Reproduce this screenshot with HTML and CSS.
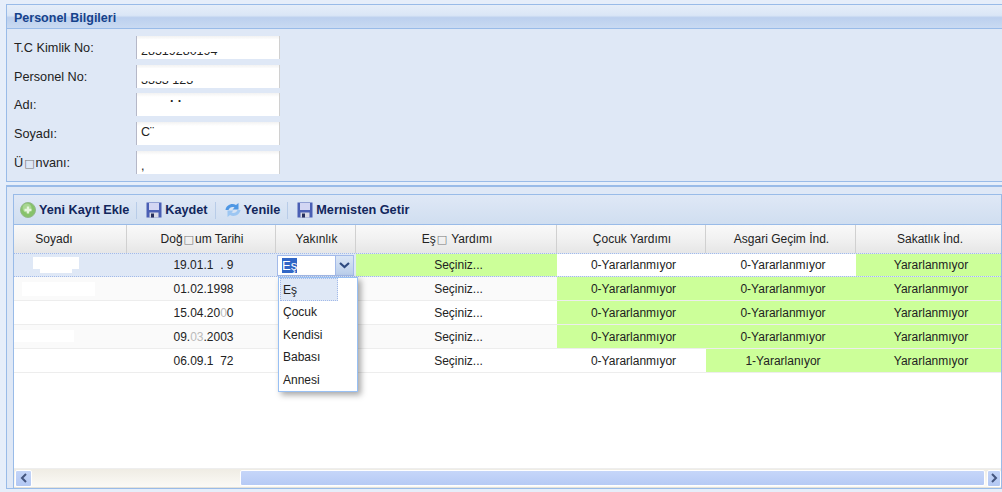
FILE: index.html
```html
<!DOCTYPE html>
<html lang="tr">
<head>
    <meta charset="UTF-8">
    <title>Personel Bilgileri</title>
    <link rel="stylesheet" href="styles.css">
</head>
<body>
    <section class="panel info-panel">
        <h2 class="panel-title">Personel Bilgileri</h2>
        <div class="form">
            <div class="form-row"><label>T.C Kimlik No:</label><div class="field"><span class="field-val">28519280194</span><span class="cover"></span></div></div>
            <div class="form-row"><label>Personel No:</label><div class="field"><span class="field-val">3333 123</span><span class="cover"></span></div></div>
            <div class="form-row"><label>Adı:</label><div class="field"><span class="field-dots">· ·</span></div></div>
            <div class="form-row"><label>Soyadı:</label><div class="field"><span class="field-top">C¨</span></div></div>
            <div class="form-row"><label>Ü<span class="box">□</span>nvanı:</label><div class="field"><span class="field-val">,</span></div></div>
        </div>
    </section>

    <section class="panel list-panel">
        <div class="grid-panel">
            <div class="toolbar">
                <button class="tool">
                    <svg width="16" height="16" viewBox="0 0 16 16"><circle cx="8" cy="8" r="7.5" fill="#86c26a" stroke="#94b98c"/><circle cx="7" cy="6" r="4.500" fill="#a9d692"/><path d="M8 4.500v7M4.500 8h7" stroke="#e6f5dd" stroke-width="2.400"/></svg>
                    Yeni Kayıt Ekle
                </button>
                <span class="sep"></span>
                <button class="tool">
                    <svg width="16" height="16" viewBox="0 0 16 16"><use href="#floppy"/></svg>
                    Kaydet
                </button>
                <span class="sep"></span>
                <button class="tool">
                    <svg width="16" height="16" viewBox="0 0 16 16"><path d="M0.500 8C1 3.500 6.500 0.500 11 3L13.500 1v6.500H7.500l2-2C7 4.500 4.500 5.500 3.500 8z" fill="#4f97e4"/><path d="M15.500 8C15 12.500 9.500 15.500 5 13L2.500 15V8.500h6l-2 2C9 11.500 11.500 10.500 12.500 8z" fill="#9cc6f2"/></svg>
                    Yenile
                </button>
                <span class="sep"></span>
                <button class="tool">
                    <svg width="16" height="16" viewBox="0 0 16 16"><use href="#floppy"/></svg>
                    Mernisten Getir
                </button>
            </div>

            <div class="grid-head">
                <div class="col c1">Soyadı</div>
                <div class="col c2">Doğ<span class="box">□</span>um Tarihi</div>
                <div class="col c3">Yakınlık</div>
                <div class="col c4">Eş<span class="box">□</span> Yardımı</div>
                <div class="col c5">Çocuk Yardımı</div>
                <div class="col c6">Asgari Geçim İnd.</div>
                <div class="col c7">Sakatlık İnd.</div>
            </div>

            <div class="grid-body">
                <div class="row selected">
                    <div class="cell c1"><span class="blob b1"></span></div>
                    <div class="cell c2">19.01.1<span class="hide">9</span>.<span class="hide">.</span>9</div>
                    <div class="cell c3">
                        <div class="combo"><span class="combo-input"><span class="hl">Eş</span></span><span class="combo-btn"><svg width="11" height="7" viewBox="0 0 11 7"><path d="M1 1l4.500 4L10 1" fill="none" stroke="#2f4a80" stroke-width="2.200"/></svg></span></div>
                    </div>
                    <div class="cell c4 on">Seçiniz...</div>
                    <div class="cell c5 plain">0-Yararlanmıyor</div>
                    <div class="cell c6 plain">0-Yararlanmıyor</div>
                    <div class="cell c7 on">Yararlanmıyor</div>
                </div>
                <div class="row alt">
                    <div class="cell c1"><span class="blob b2"></span></div>
                    <div class="cell c2">01.02.1998</div>
                    <div class="cell c3"></div>
                    <div class="cell c4">Seçiniz...</div>
                    <div class="cell c5 on">0-Yararlanmıyor</div>
                    <div class="cell c6 on">0-Yararlanmıyor</div>
                    <div class="cell c7 on">Yararlanmıyor</div>
                </div>
                <div class="row">
                    <div class="cell c1"></div>
                    <div class="cell c2">15.04.20<span class="faint">0</span>0</div>
                    <div class="cell c3"></div>
                    <div class="cell c4">Seçiniz...</div>
                    <div class="cell c5 on">0-Yararlanmıyor</div>
                    <div class="cell c6 on">0-Yararlanmıyor</div>
                    <div class="cell c7 on">Yararlanmıyor</div>
                </div>
                <div class="row alt">
                    <div class="cell c1"><span class="blob b3"></span></div>
                    <div class="cell c2">09.<span class="faint">03</span>.2003</div>
                    <div class="cell c3"></div>
                    <div class="cell c4">Seçiniz...</div>
                    <div class="cell c5 on">0-Yararlanmıyor</div>
                    <div class="cell c6 on">0-Yararlanmıyor</div>
                    <div class="cell c7 on">Yararlanmıyor</div>
                </div>
                <div class="row">
                    <div class="cell c1"></div>
                    <div class="cell c2">06.09.1<span class="hide">9</span>72</div>
                    <div class="cell c3"></div>
                    <div class="cell c4">Seçiniz...</div>
                    <div class="cell c5">0-Yararlanmıyor</div>
                    <div class="cell c6 on">1-Yararlanıyor</div>
                    <div class="cell c7 on">Yararlanmıyor</div>
                </div>
            </div>

            <div class="scrollbar">
                <span class="sb-btn"><svg width="8" height="10" viewBox="0 0 8 10"><path d="M6 1L2 5l4 4" fill="none" stroke="#44557f" stroke-width="2"/></svg></span>
                <span class="sb-track"><span class="sb-thumb"></span></span>
                <span class="sb-btn sb-right"><svg width="8" height="10" viewBox="0 0 8 10"><path d="M2 1l4 4-4 4" fill="none" stroke="#44557f" stroke-width="2"/></svg></span>
            </div>
        </div>
    </section>

    <ul class="dropdown">
        <li class="active">Eş</li>
        <li>Çocuk</li>
        <li>Kendisi</li>
        <li>Babası</li>
        <li>Annesi</li>
    </ul>

    <svg class="defs" width="0" height="0">
        <symbol id="floppy" viewBox="0 0 16 16">
            <path d="M0.500 0.500h15v15H0.500z" fill="#4a5fb4"/>
            <path d="M3 1h10v7H3z" fill="#d3d6f3"/>
            <path d="M3.500 10.500h9V15.500h-9z" fill="#d9dbe6"/>
            <path d="M5 11.500h3V15.500H5z" fill="#27305e"/>
        </symbol>
    </svg>
</body>
</html>
```

FILE: styles.css
```css
* {
    margin: 0;
    padding: 0;
    box-sizing: border-box;
}

html, body {
    width: 1002px;
    height: 492px;
    overflow: hidden;
}

body {
    font-family: "Liberation Sans", Arial, sans-serif;
    font-size: 12px;
    color: #222;
    background: #e6eefa;
    padding: 4px 0 0 6px;
    position: relative;
}

.panel {
    border: 1px solid #99bbe8;
    border-right: 0;
    background: #dfe8f6;
}

.info-panel {
    height: 178px;
}

.panel-title {
    height: 24px;
    padding: 5px 0 0 7px;
    font-size: 12.500px;
    line-height: 16px;
    font-weight: bold;
    color: #15428b;
    background: linear-gradient(#e6eef9 0%, #dae6f6 45%, #bcd0ee 55%, #c9daf2 100%);
    border-bottom: 1px solid #99bbe8;
}

.form {
    padding: 7px 0 0 7px;
    display: flex;
    flex-direction: column;
    gap: 5.700px;
}

.form-row {
    display: flex;
    align-items: center;
}

.form-row label {
    width: 122px;
    padding-top: 1px;
    font-size: 12.700px;
}

.box {
    font-family: "DejaVu Sans", sans-serif;
    font-size: 11px;
    margin: 0 1px;
    color: #777;
}

.field {
    width: 144px;
    height: 23px;
    background: linear-gradient(#f2f2f2, #fff 4px);
    border-left: 1px solid #b5b8c8;
    border-right: 1px solid #d0d0d0;
    padding: 7px 0 0 4px;
    line-height: 16px;
    font-size: 12.500px;
    overflow: hidden;
    position: relative;
}

/* whites out the upper part of the masked values */
.cover {
    position: absolute;
    left: 0;
    right: 0;
    top: 3px;
    height: 13px;
    background: #fff;
}

.field-dots {
    position: absolute;
    left: 33px;
    top: 0;
    font-weight: bold;
}

.field-top {
    position: absolute;
    left: 4px;
    top: 2px;
}

.list-panel {
    margin-top: 3px;
    height: 304px;
    border-top: 2px solid #99bbe8;
    padding: 7px 0 0 6px;
}

.grid-panel {
    height: 295px;
    border: 1px solid #99bbe8;
    background: #fff;
    display: flex;
    flex-direction: column;
    overflow: hidden;
}

.toolbar {
    height: 30px;
    flex: none;
    display: flex;
    align-items: center;
    padding: 1px 0 0 6px;
    background: linear-gradient(#dfe8f6, #d0def0);
    border-bottom: 1px solid #99bbe8;
}

.tool {
    display: flex;
    align-items: center;
    gap: 3px;
    border: 0;
    background: none;
    font: bold 12.700px "Liberation Sans", Arial, sans-serif;
    color: #12265c;
}

.sep {
    width: 1px;
    height: 17px;
    background: #b8cce8;
    margin: 0 9px 0 7px;
}

.grid-head {
    height: 28px;
    flex: none;
    display: flex;
    background: linear-gradient(#f9f9f9, #f2f2f2 45%, #e6e6e6);
}

.col {
    line-height: 28px;
    text-align: center;
    padding-left: 2px;
    border-right: 1px solid #d0d0d0;
}

.c1 { width: 113px; flex: none; }
.c2 { width: 149px; flex: none; }
.c3 { width: 80px; flex: none; }
.c4 { width: 201px; flex: none; }
.c5 { width: 149px; flex: none; }
.c6 { width: 150px; flex: none; }
.c7 { width: 146px; flex: none; }

.col.c1 {
    padding: 0 32px 0 0;
}

.col.c7 {
    border-right: 0;
}

.grid-body {
    flex: 1;
    min-height: 0;
}

.row {
    height: 24px;
    display: flex;
    border-bottom: 1px solid #ededed;
    background: #fff;
}

.row.alt {
    background: #fafafa;
}

.row.selected {
    background: #dfe8f6;
    border-top: 1px dotted #a3bae9;
    border-bottom: 1px dotted #a3bae9;
}

.row.selected .cell {
    padding-top: 0;
}

.cell {
    line-height: 23px;
    text-align: center;
    padding: 1px 0 0 4px;
    position: relative;
}

.cell.on {
    background: #ccff99;
}

.cell.plain {
    background: #fff;
}

.hide {
    color: transparent;
}

.faint {
    color: #bbb;
}

.blob {
    position: absolute;
    background: #fff;
    display: block;
}

.b1 { left: 19px; top: 3px; width: 46px; height: 12px; }
.b1::after {
    content: '';
    position: absolute;
    left: 7px;
    top: 12px;
    width: 32px;
    height: 4px;
    background: #fff;
}
.b2 { left: 8px; top: 5px; width: 73px; height: 14px; }
.b3 { left: -1px; top: 5px; width: 61px; height: 12px; }

.combo {
    position: absolute;
    left: 1px;
    top: 1px;
    width: 77px;
    height: 21px;
    display: flex;
    border: 1px solid #a3bae9;
    text-align: left;
    background: #fff;
}

.combo-input {
    flex: 1;
    padding-left: 4px;
    line-height: 19px;
    font-size: 13px;
}

.hl {
    background: #3166c6;
    color: #fff;
}

.combo-btn {
    width: 18px;
    display: flex;
    align-items: center;
    justify-content: center;
    background: linear-gradient(#dbe6f6, #b9cdea);
    border-left: 1px solid #a3bae9;
}

.scrollbar {
    height: 20px;
    flex: none;
    margin-top: auto;
    display: flex;
    align-items: center;
    background: linear-gradient(#efece4, #fbfaf6);
    border-top: 1px solid #eee;
    border-bottom: 1px solid #e4e2da;
    padding-left: 1px;
}

.sb-btn {
    width: 17px;
    height: 17px;
    flex: none;
    display: flex;
    align-items: center;
    justify-content: center;
    background: linear-gradient(#c3d4f8, #b3c8f3);
    border: 1px solid #fff;
    border-radius: 2px;
}

.sb-right {
    width: 14px;
}

.sb-track {
    flex: 1;
    height: 100%;
    padding: 0 2px 0 208px;
    display: flex;
    align-items: center;
}

.sb-thumb {
    flex: 1;
    height: 16px;
    background: linear-gradient(#c6d6f9, #b6caf5);
    border: 1px solid #fff;
    border-radius: 2px;
}

.dropdown {
    position: absolute;
    left: 278px;
    top: 277px;
    width: 80px;
    height: 115px;
    list-style: none;
    background: #fff;
    border: 1px solid #98c0f4;
    box-shadow: 3px 3px 6px rgba(0, 0, 0, 0.35);
    padding: 0 1px;
}

.dropdown li {
    height: 22.800px;
    line-height: 22px;
    padding-left: 3px;
}

.dropdown li.active {
    width: 58px;
    padding-left: 2px;
    background: #dfe8f6;
    border: 1px dotted #a3bae9;
}

.defs {
    position: absolute;
}
```
